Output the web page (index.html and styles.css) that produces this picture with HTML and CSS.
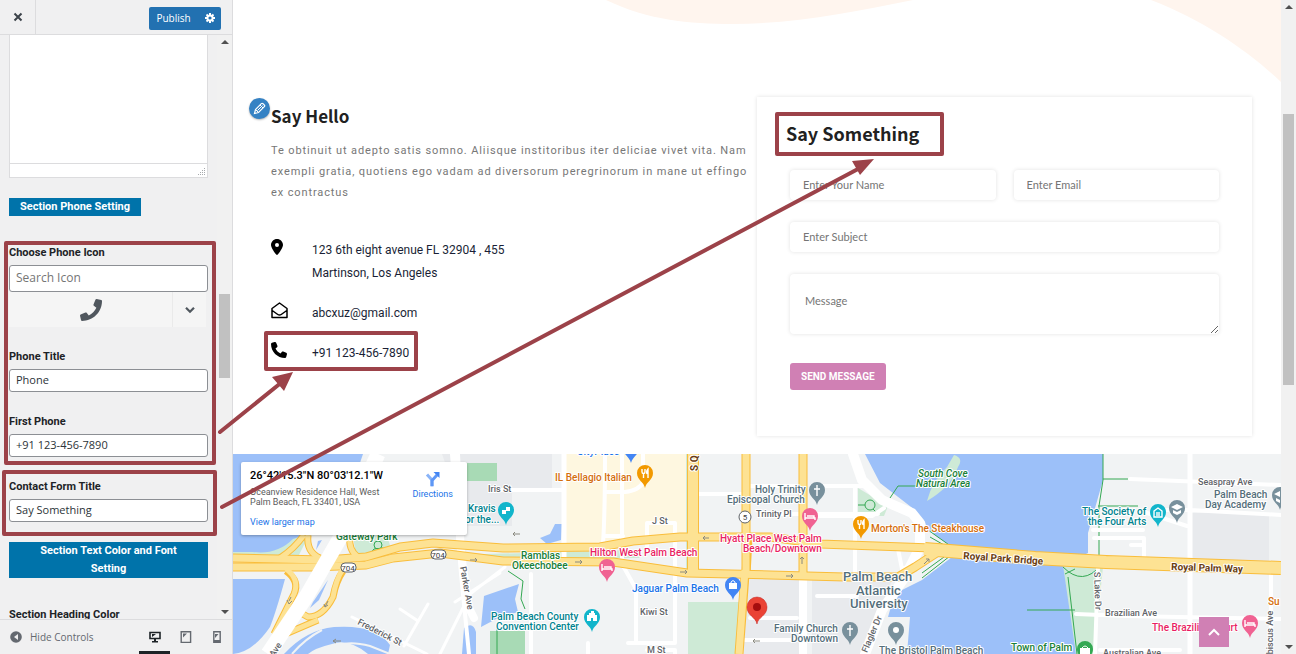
FILE: index.html
```html
<!DOCTYPE html>
<html lang="en">
<head>
    <meta charset="UTF-8">
    <meta name="viewport" content="width=device-width, initial-scale=1.0">
    <title>Customize: Contact Section</title>
    <link rel="stylesheet" href="styles.css">
</head>
<body>
    <aside class="sidebar">
        <header class="sidebar-header">
            <button class="close-btn" aria-label="Close">
                <svg width="10" height="10" viewBox="0 0 10 10"><path d="M1.5 1.5l7 7M8.5 1.5l-7 7" stroke="#3c434a" stroke-width="2"/></svg>
            </button>
            <div class="publish-group">
                <button class="publish-btn">Publish</button>
                <button class="gear-btn" aria-label="Publish settings">
                    <svg width="10" height="10" viewBox="0 0 10 10" fill="none" stroke="#fff">
                        <circle cx="5" cy="5" r="2.6" stroke-width="2"/>
                        <path d="M5 0v2M5 8v2M0 5h2M8 5h2M1.5 1.5l1.4 1.4M7.1 7.1l1.4 1.4M8.5 1.5L7.1 2.9M2.9 7.1L1.5 8.5" stroke-width="2"/>
                    </svg>
                </button>
            </div>
        </header>

        <div class="sidebar-body">
            <div class="panel">
                <div class="editor">
                    <textarea class="editor-text" aria-label="Section content"></textarea>
                    <div class="editor-status">
                        <svg width="8" height="8" viewBox="0 0 8 8" fill="#a7aaad"><path d="M6 0h1v1H6zM4 2h1v1H4zM6 2h1v1H6zM2 4h1v1H2zM4 4h1v1H4zM6 4h1v1H6zM0 6h1v1H0zM2 6h1v1H2zM4 6h1v1H4zM6 6h1v1H6z"/></svg>
                    </div>
                </div>
                <h3 class="section-title section-title-phone">Section Phone Setting</h3>

                <div class="control">
                    <label for="icon-search">Choose Phone Icon</label>
                    <input class="icon-search" id="icon-search" type="text" placeholder="Search Icon">
                    <div class="icon-picker">
                        <button class="icon-current" aria-label="Selected icon">
                            <svg width="22" height="22" viewBox="0 0 512 512" fill="#50575e"><path d="M493.4 24.6l-104-24c-11.3-2.6-22.9 3.3-27.5 13.9l-48 112c-4.2 9.8-1.4 21.3 6.9 28l60.6 49.6c-36 76.7-98.9 140.5-177.2 177.2l-49.6-60.6c-6.8-8.3-18.2-11.1-28-6.9l-112 48C3.9 366.5-2 378.1.6 389.4l24 104C27.1 504.2 36.7 512 48 512c256.1 0 464-207.5 464-464 0-11.2-7.7-20.9-18.6-23.4z"/></svg>
                        </button>
                        <button class="icon-toggle" aria-label="Show icons">
                            <svg width="10" height="8" viewBox="0 0 10 8"><path d="M1 1.8l4 4 4-4" fill="none" stroke="#50575e" stroke-width="2.2"/></svg>
                        </button>
                    </div>
                </div>
                <div class="control">
                    <label for="phone-title">Phone Title</label>
                    <input id="phone-title" type="text" value="Phone">
                </div>
                <div class="control">
                    <label for="first-phone">First Phone</label>
                    <input id="first-phone" type="text" value="+91 123-456-7890">
                </div>
                <div class="control">
                    <label for="form-title">Contact Form Title</label>
                    <input id="form-title" type="text" value="Say Something">
                </div>
                <h3 class="section-title section-title-wide">Section Text Color and Font Setting</h3>
                <span class="control-title">Section Heading Color</span>
            </div>
            <div class="scrollbar">
                <span class="arrow-up"></span>
                <span class="thumb thumb-side"></span>
                <span class="arrow-down"></span>
            </div>
        </div>

        <footer class="sidebar-footer">
            <button class="hide-controls">
                <svg width="12" height="12" viewBox="0 0 12 12"><circle cx="6" cy="6" r="5.8" fill="#646970"/><path d="M8 3v6L4 6z" fill="#f0f0f1"/></svg>
                Hide Controls
            </button>
            <div class="devices">
                <button class="device active" aria-label="Desktop">
                    <svg width="12" height="12" viewBox="0 0 12 12"><path d="M1 1.5h10v6H1z" fill="none" stroke="#1d2327" stroke-width="1.6"/><path d="M5 8h2v2h2v1.6H3V10h2zM3 3h4L3 6z" fill="#1d2327"/></svg>
                </button>
                <button class="device" aria-label="Tablet">
                    <svg width="12" height="12" viewBox="0 0 12 12"><path d="M1.2.8h9.4v10.6H1.2z" fill="none" stroke="#646970" stroke-width="1.4"/><path d="M3 2.5h4l-4 4z" fill="#646970"/></svg>
                </button>
                <button class="device" aria-label="Mobile">
                    <svg width="12" height="12" viewBox="0 0 12 12"><path d="M2.8.8h6.4v10.4H2.8z" fill="none" stroke="#646970" stroke-width="1.4"/><path d="M4 3h3.5L4 7zM3 9h6v2.4H3z" fill="#646970"/></svg>
                </button>
            </div>
        </footer>
    </aside>

    <div class="preview">
        <main class="page">
            <svg class="blob" viewBox="0 0 1048 90" preserveAspectRatio="none" aria-hidden="true" fill="#fff5ee">
                <path d="M373 0C415 20 455 24 500 24C560 24 620 12 680 0z"/>
                <path d="M918 0C975 22 1020 55 1048 82V0z"/>
            </svg>
            <section class="contact">
                <div class="info">
                    <button class="edit-shortcut" aria-label="Edit this section">
                        <svg width="13" height="13" viewBox="0 0 13 13" fill="none" stroke="#fff"><path d="M1.5 11.5l1-4 5.800-5.800q.8-.8 1.700 0l1.300 1.300q.9.8 0 1.700L5.500 10.500z" stroke-width="1.200"/><path d="M4.500 8.500l5-5M7 3l3 3M2.500 7.500l3 3"/></svg>
                    </button>
                    <h2>Say Hello</h2>
                    <p class="intro">Te obtinuit ut adepto satis somno. Aliisque institoribus iter deliciae vivet vita. Nam exempli gratia, quotiens ego vadam ad diversorum peregrinorum in mane ut effingo ex contractus</p>
                    <ul class="contact-list">
                        <li>
                            <svg width="16" height="16" viewBox="0 0 512 512"><path d="M215.700 499.200C267 435 384 279.400 384 192C384 86 298 0 192 0S0 86 0 192c0 87.400 117 243 168.300 307.200c12.300 15.300 35.100 15.300 47.400 0zM192 128a64 64 0 1 1 0 128 64 64 0 1 1 0-128z"/></svg>
                            <span>123 6th eight avenue FL 32904 , 455<br>Martinson, Los Angeles</span>
                        </li>
                        <li>
                            <svg width="17" height="17" viewBox="0 0 17 17" fill="none" stroke="#000" stroke-width="1.500" stroke-linejoin="round"><path d="M1 6.500L8.500 1 16 6.500V15.500H1zM1.200 8.500l5.600 4q1.700 1.200 3.400 0L15.800 8.500"/></svg>
                            <span>abcxuz@gmail.com</span>
                        </li>
                        <li>
                            <svg width="16" height="16" viewBox="0 0 512 512"><path d="M164.900 24.600c-7.700-18.600-28-28.500-47.400-23.200l-88 24C12.100 30.200 0 46 0 64C0 311.400 200.600 512 448 512c18 0 33.800-12.100 38.600-29.500l24-88c5.300-19.400-4.600-39.700-23.200-47.400l-96-40c-16.300-6.800-35.200-2.100-46.300 11.600L304.700 368C234.300 334.700 177.300 277.700 144 207.300L193.300 167c13.700-11.200 18.400-30 11.600-46.300l-40-96z"/></svg>
                            <span>+91 123-456-7890</span>
                        </li>
                    </ul>
                </div>

                <form class="form-card">
                    <h2>Say Something</h2>
                    <div class="fields">
                        <input type="text" placeholder="Enter Your Name" aria-label="Name">
                        <input type="email" placeholder="Enter Email" aria-label="Email">
                        <input class="full" type="text" placeholder="Enter Subject" aria-label="Subject">
                        <textarea class="full" placeholder="Message" aria-label="Message"></textarea>
                    </div>
                    <button class="send-btn" type="button">SEND MESSAGE</button>
                </form>
            </section>

            <section class="map">
                <svg class="map-canvas" viewBox="233 454 1048 200" preserveAspectRatio="xMinYMin slice">
                    <defs>
                        <path id="pin" d="M0 14C-1 8-8 6-8-1a8 8 0 0 1 16 0C8 6 1 8 0 14z"/>
                    </defs>
                    <rect x="233" y="454" width="1048" height="200" fill="#f1f3f4"/>

                    <!-- blocks -->
                    <path d="M442 454h110v38h-40v34h-45z" fill="#e8eaed"/>
                    <path d="M750 578h55v76h-68zM812 580h80l-28 74h-52z" fill="#e8eaed"/>
                    <path d="M1192 513h77v48h-77z" fill="#e8eaed"/>
                    <path d="M564 454h123v82l-60 8h-61z" fill="#fef7e0"/>

                    <!-- parks -->
                    <path d="M467 463h30v18h-30zM490 631l35 0v23h-35z" fill="#a8dab5"/>
                    <path d="M688 602h51l-3 52h-48zM686 454h4v118h-4z" fill="#ceead6"/>
                    <path d="M233 550q45 3 60-15h16l-12 24h-64z" fill="#ceead6"/>
                    <path d="M353 535h34l4 14-35 8zM450 555l180-5 10 8H500z" fill="#ceead6"/>
                    <path d="M858 488l30 18-4 10h-26z" fill="#ceead6"/>

                    <!-- water -->
                    <g fill="#9cc0f9">
                        <path d="M233 454h130q-8 20-5 45l-30 28-35 12q-16 16-40 13h-20z"/>
                        <path d="M233 579h52q-9 33-15 48-17 25-37 27z"/>
                        <path d="M328 580l-9 20-9 8 3-6z"/>
                        <path d="M322 540l-6 10 2-9z"/>
                        <path d="M284 654q22-24 50-27 42-3 56 18l-2 9h-20q-20-16-36-10-17 4-24 10z"/>
                        <path d="M562 524l-1 16-14 4-7-6 10-4 5-10z"/>
                        <path d="M484 596l35-12-4 15 3 13-20 6-17 9z"/>
                        <path d="M464 628q9-7 12 4v22h-14z"/>
                        <path d="M865 454l15 29 35 27 10 12 3 8 24 17v10l-30 23-20 10-12 20-2 7h22l-3 37h169l-8-77-5-12 25-12v-20l15-53v-26z"/>
                    </g>
                    <path d="M292 654q14-16 30-24M330 654q8-16 40-8l20 8" fill="none" stroke="#f1f3f4" stroke-width="2"/>
                    <path d="M1063 565l40 2-9 87h-18z" fill="#ceead6"/>
                    <path d="M954 455q10 3 4 12-7 20-31 34 5-20 20-34z" fill="#ceead6"/>
                    <path d="M890 498l8-12h20M1103 454v26l-4 26v50M1103 479h25M1098 506h40M1068 577l9 77M1063 567q20 20 38-2M1027 610h48M1065 574l10-5M928 530l24 17M930 537l14 8M922 578l28-22M922 573l22-16M508 571l15 10-2 18 4 10M497 654v-25" fill="none" stroke="#34a853"/>
                    <path d="M858 505h7m8 4l5 5M865 505a5 5 0 1 0 10 0 5 5 0 1 0-10 0M374 545a4 4 0 1 0 8 0 4 4 0 1 0-8 0M368 556l6-7 9-1 9 5" fill="none" stroke="#34a853"/>

                    <!-- local streets -->
                    <g fill="none" stroke="#fff" stroke-width="4" stroke-linejoin="round" stroke-linecap="round">
                        <path d="M452 454l9 120 8 80M500 490h64M564 454v105M605 454q0 60-2 90M622 454v110l14 25v54h39v-120h-28v28M605 536h18M605 492h20q15-2 18-10v-28"/>
                        <path d="M628 643h9M647 650h28v4M531 654v-80M588 643v11M694 494h50M750 486h50M750 618h47M745 640h55M760 514h118M812 486h52M812 516h60l12-8M855 487v90M898 549l4 20 14-6M817 596h40"/>
                        <path d="M352 617l75 37M400 609l18 12M428 604l-24 42M440 654l30-60 35-27M455 602l45-29" stroke-width="3"/>
                        <path d="M1130 479l150 6M1147 513l40 13h3M1190 454v200M1160 510l30 0 92 5M1093 530h50M1094 538h50v24M1131 545h12M1076 614l50 2 155 3M1098 566l-3 88M1271 572v82M1100 650h80"/>
                        <path d="M803 578v76" stroke-width="8"/>
                        <path d="M456 454l5 100 8 54 5 10" stroke-width="8"/>
                        <path d="M1190 454v200M564 454v105" stroke-width="5"/>
                        <path d="M853 454l9 26 20 20 30 13 8 10v24l-15 30-23 33-17 44" stroke-width="10"/>
                    </g>

                    <!-- main roads, outline first and fill above -->
                    <g fill="none" stroke-linejoin="round">
                        <g stroke="#f9bd3b">
                            <path d="M233 558l93 2 40-3 34-10 33-4 70 5 97-1 33-6 47-4h90l50 7 112 4" stroke-width="9"/>
                            <path d="M233 567h80l53-2 27-7 47-5 63 8 110 1 74 11 83 2 75 2h53l17-10 23-15" stroke-width="9"/>
                            <path d="M745 575l-6 79M803 454v122M748 538l-2 37" stroke-width="9"/>
                            <path d="M693 454v122" stroke-width="12"/>
                            <path d="M746 454v122" stroke-width="9"/>
                            <path d="M925 549l110 9 71 4 175 6" stroke-width="14"/>
                            <path d="M286 571q14 10 8 23l-20 40M343 571q-7 10-10 26-10 20-25 20l-14-8M304 535q-10 14-24 23M308 535q-2 17 12 23M350 535q-2 15 8 22M318 620l-35 15" stroke-width="7"/>
                        </g>
                        <g stroke="#fde293">
                            <path d="M233 558l93 2 40-3 34-10 33-4 70 5 97-1 33-6 47-4h90l50 7 112 4" stroke-width="7"/>
                            <path d="M233 567h80l53-2 27-7 47-5 63 8 110 1 74 11 83 2 75 2h53l17-10 23-15" stroke-width="7"/>
                            <path d="M745 570l-6 84M803 454v122" stroke-width="7"/>
                            <path d="M693 454v120" stroke-width="10"/>
                            <path d="M746 454v122" stroke-width="7"/>
                            <path d="M924 549l111 9 71 4 176 6" stroke-width="12"/>
                            <path d="M286 569q14 10 8 25l-20 40M343 569q-7 10-10 28-10 20-25 20l-14-8M304 535q-10 14-24 23M308 535q-2 17 12 23M350 535q-2 15 8 22M318 620l-35 15" stroke-width="5"/>
                        </g>
                        <path d="M378 454l-38 84-34 59-38 57" stroke="#fff" stroke-width="15"/>
                        <path d="M291 597l-2 4m3 0l-3 3-2-4M328 601l-3 6m3-2l-3 2-1-3M341 641l-8 0m3-2l-3 2 3 2M470 560h7m-2-2l2 2-2 2M575 562h7m-2-2l2 2-2 2M680 572h7m-2-2l2 2-2 2M709 538h-6m2-2l-2 2 2 2M786 576h7m-2-2l2 2-2 2M802 564v-7m-2 2l2-2 2 2M520 534h-7m2-2l-2 2 2 2M760 641h-7m2-2l-2 2 2 2M924 564l5-5m-3 0h3v3" stroke="#8a8a80"/>
                    </g>

                    <!-- route shields -->
                    <g fill="#fff" stroke="#5f6368">
                        <rect x="341" y="563" width="15" height="9" rx="4"/>
                        <rect x="431" y="550" width="15" height="9" rx="4"/>
                        <circle cx="745" cy="517" r="6"/>
                    </g>
                    <g class="shield">
                        <text x="348" y="571">704</text>
                        <text x="438" y="558">704</text>
                        <text x="745" y="520">5</text>
                    </g>

                    <!-- places -->
                    <g class="label food">
                        <text x="555" y="481">IL Bellagio Italian</text>
                        <text x="871" y="532">Morton's The Steakhouse</text>
                        <text x="1268" y="605">Su</text>
                    </g>
                    <g class="label hotel">
                        <text x="590" y="556">Hilton West Palm Beach</text>
                        <text x="720" y="542">Hyatt Place West Palm</text>
                        <text x="743" y="552">Beach/Downtown</text>
                        <text x="1152" y="631">The Brazilian Court</text>
                    </g>
                    <g class="label culture">
                        <text x="468" y="512">Kravis</text>
                        <text x="465" y="523">or the...</text>
                        <text x="491" y="620">Palm Beach County</text>
                        <text x="496" y="630">Convention Center</text>
                        <text x="1082" y="515">The Society of</text>
                        <text x="1088" y="525">the Four Arts</text>
                    </g>
                    <g class="label park">
                        <text x="336" y="540">Gateway Park</text>
                        <text x="521" y="559">Ramblas</text>
                        <text x="512" y="569">Okeechobee</text>
                        <text class="italic" x="918" y="477">South Cove</text>
                        <text class="italic" x="916" y="487">Natural Area</text>
                        <text x="1011" y="651">Town of Palm</text>
                    </g>
                    <g class="label shop">
                        <text x="577" y="455">CityPlace</text>
                        <text x="632" y="592">Jaguar Palm Beach</text>
                    </g>
                    <g class="label civic">
                        <text x="755" y="493">Holy Trinity</text>
                        <text x="727" y="503">Episcopal Church</text>
                        <text x="774" y="632">Family Church</text>
                        <text x="791" y="642">Downtown</text>
                        <text x="879" y="654">The Bristol Palm Beach</text>
                        <text x="1214" y="498">Palm Beach</text>
                        <text x="1205" y="508">Day Academy</text>
                        <g class="large">
                            <text x="843" y="581">Palm Beach</text>
                            <text x="856" y="595">Atlantic</text>
                            <text x="850" y="608">University</text>
                        </g>
                    </g>
                    <g class="label street">
                        <text x="488" y="492">Iris St</text>
                        <text x="652" y="524">J St</text>
                        <text x="640" y="615">Kiwi St</text>
                        <text x="647" y="653">M St</text>
                        <text x="756" y="517">Trinity Pl</text>
                        <text x="1198" y="485">Seaspray Ave</text>
                        <text x="1105" y="616">Brazilian Ave</text>
                        <text x="1103" y="656">Australian Ave</text>
                        <text transform="translate(460 567) rotate(80)">Parker Ave</text>
                        <text transform="translate(357 624) rotate(27)">Frederick St</text>
                        <text transform="translate(271 662) rotate(-57)">r Ave</text>
                        <text transform="translate(867 653) rotate(-67)">Flagler Dr</text>
                        <text transform="translate(1094 572) rotate(88)">S Lake Dr</text>
                        <text transform="translate(1273 663) rotate(-90)">Hibiscus Ave</text>
                    </g>
                    <g class="label highway">
                        <text transform="translate(963 559) rotate(4)">Royal Park Bridge</text>
                        <text transform="translate(1171 570) rotate(2)">Royal Palm Way</text>
                        <text transform="translate(698 471) rotate(-90)">S Q</text>
                    </g>

                    <!-- pins -->
                    <g fill="#f29900">
                        <use href="#pin" x="645" y="474"/>
                        <use href="#pin" x="861" y="525"/>
                    </g>
                    <g fill="#f06292">
                        <use href="#pin" x="607" y="568"/>
                        <use href="#pin" x="810" y="517"/>
                        <use href="#pin" x="1250" y="624"/>
                    </g>
                    <g fill="#12b5cb">
                        <use href="#pin" x="506" y="511"/>
                        <use href="#pin" x="592" y="618"/>
                        <use href="#pin" x="1158" y="513"/>
                    </g>
                    <g fill="#4285f4">
                        <use href="#pin" x="631" y="449"/>
                        <use href="#pin" x="733" y="586"/>
                    </g>
                    <g fill="#78909c">
                        <use href="#pin" x="817" y="491"/>
                        <use href="#pin" x="850" y="631"/>
                        <use href="#pin" x="896" y="631"/>
                        <use href="#pin" x="1177" y="509"/>
                        <use href="#pin" x="1280" y="496"/>
                    </g>
                    <use href="#pin" x="1085" y="650" fill="#34a853"/>
                    <path d="M757 624c-1-7-10-8-10-17a10 10 0 0 1 20 0c0 9-9 10-10 17z" fill="#ea4335" stroke="#c5221f" stroke-width=".5"/>
                    <circle cx="757" cy="607" r="4" fill="#a50e0e"/>
                    <g fill="none" stroke="#fff" stroke-width="1.400">
                        <path d="M642 469v3q0 1.500 1.500 1.500V478M645 469v3q0 1.500-1.500 1.500M648 478v-9q-2 2-1 5M858 520v3q0 1.500 1.500 1.500V529M861 520v3q0 1.500-1.500 1.500M864 529v-9q-2 2-1 5"/>
                        <path d="M602 564v7M602 569h10v2M604 567h7v2M805 513v7M805 518h10v2M807 516h7v2M1245 620v7M1245 625h10v2M1247 623h7v2"/>
                        <path d="M817 485v11M814 489h6M850 625v11M847 629h6"/>
                        <path d="M1154 517v-6l4-3 4 3v6zM1157 512v4M1159 512v4"/>
                    </g>
                    <path d="M587 621v-6h2v-2h2v-2h3v2h1v2h2v6h-4v-3h-2v3zM729 583h8v6h-8zM1080 648h10v6h-10zM502 510h4v4h-4zM506 507h4v4h-4z" fill="#fff"/>
                    <path d="M731 584v-2q2-3 4 0v2M1082 648q3-4 6 0" fill="none" stroke="#fff"/>
                    <path d="M1171 507l6-3 6 3-6 3zM1173 510l4 2 4-2v3l-4 2-4-2zM1274 494l6-3v6zM1276 498l4 2v3l-4-2z" fill="#fff"/>
                    <circle cx="896" cy="630" r="3" fill="#fff"/>
                </svg>

                <div class="map-card">
                    <div class="map-address">
                        <strong>26°42'15.3"N 80°03'12.1"W</strong>
                        <p>Oceanview Residence Hall, West<br>Palm Beach, FL 33401, USA</p>
                        <a href="#">View larger map</a>
                    </div>
                    <a class="directions" href="#">
                        <svg width="16" height="16" viewBox="0 0 16 16"><path d="M7 15.500V9L2 3.500" fill="none" stroke="#8ab4f8" stroke-width="3"/><path d="M7 15V9.500L12 4" fill="none" stroke="#5e97f6" stroke-width="3"/><path d="M8.500 1H14.500V7z" fill="#4285f4"/></svg>
                        Directions
                    </a>
                </div>
                <a class="to-top" href="#" aria-label="Back to top">
                    <svg width="12" height="8" viewBox="0 0 12 8"><path d="M1 7l5-5 5 5" fill="none" stroke="#fff" stroke-width="2"/></svg>
                </a>
            </section>
        </main>
        <div class="scrollbar">
            <span class="arrow-up"></span>
            <span class="thumb thumb-page"></span>
            <span class="arrow-down"></span>
        </div>
    </div>

    <!-- callouts drawn over the whole screen -->
    <svg class="callouts" viewBox="0 0 1296 654" preserveAspectRatio="xMinYMin" aria-hidden="true">
        <g fill="none" stroke="#9c4249" stroke-width="4" stroke-linejoin="round" stroke-linecap="round">
            <rect x="6" y="243" width="208" height="220"/>
            <rect x="4" y="472" width="211" height="62"/>
            <rect x="266" y="333" width="150" height="36"/>
            <rect x="777" y="114" width="165" height="40"/>
            <path d="M220 432l62-50M222 507l636-338"/>
        </g>
        <path d="M293 372l-9 19-12-14zM874 159l-14 16-8-14z" fill="#9c4249"/>
    </svg>
</body>
</html>
```
FILE: styles.css
```css
* {
    box-sizing: border-box;
}
body {
    margin: 0;
    height: 100vh;
    display: flex;
    position: relative;
    overflow: hidden;
    font-family: "Open Sans", "Noto Sans", sans-serif;
    font-size: 11px;
    color: #3c434a;
    background: #fff;
}
h2, h3, p, ul {
    margin: 0;
    padding: 0;
}
button {
    border: none;
    padding: 0;
    background: none;
    font-family: inherit;
    cursor: pointer;
}
svg {
    display: block;
}

/* sidebar */
.sidebar {
    width: 233px;
    flex: none;
    display: flex;
    flex-direction: column;
    background: #f0f0f1;
    border-right: 1px solid #dcdcde;
}
.sidebar-header {
    height: 35px;
    flex: none;
    display: flex;
    justify-content: space-between;
    align-items: center;
    padding-right: 11px;
    border-bottom: 1px solid #dcdcde;
}
.close-btn {
    width: 36px;
    height: 100%;
    display: flex;
    align-items: center;
    justify-content: center;
    border-right: 1px solid #dcdcde;
}
.publish-group {
    display: flex;
    height: 23px;
    margin-top: 2px;
    border-radius: 2px;
    overflow: hidden;
    background: #2271b1;
}
.publish-btn {
    width: 49px;
    color: #fff;
    font-size: 10px;
}
.gear-btn {
    width: 23px;
    display: flex;
    align-items: center;
    justify-content: center;
}
.sidebar-body {
    flex: 1;
    min-height: 0;
    display: flex;
}
.panel {
    flex: 1;
    overflow: hidden;
    padding: 0 9px;
}
.editor {
    border: 1px solid #dcdcde;
    border-top: none;
    background: #fff;
}
.editor-text {
    display: block;
    width: 100%;
    height: 128px;
    border: none;
    resize: none;
}
.editor-status {
    height: 14px;
    display: flex;
    justify-content: flex-end;
    align-items: flex-end;
    padding: 1px;
    border-top: 1px solid #dcdcde;
}
.section-title {
    background: #0073aa;
    color: #fff;
    font-family: Roboto, sans-serif;
    font-size: 11px;
    line-height: 18px;
    text-align: center;
}
.section-title-phone {
    width: fit-content;
    margin: 20px 0 27px;
    padding: 0 11px;
}
.section-title-wide {
    margin: 20px 0 27px;
    padding: 0 24px;
}
.control {
    margin-bottom: 20px;
}
.control label, .control-title {
    display: block;
    color: #1d2327;
    font-family: Roboto, sans-serif;
    font-weight: 700;
    line-height: 20px;
    margin-bottom: 2px;
}
.control input {
    display: block;
    width: 100%;
    height: 23px;
    padding: 0 6px 2px;
    border: 1px solid #8c8f94;
    border-radius: 3px;
    background: #fff;
    color: #2c3338;
    font-family: inherit;
    font-size: 11px;
}
.control .icon-search {
    height: 27px;
    font-size: 12px;
}
.icon-search::placeholder {
    color: #757575;
}
.icon-picker {
    display: flex;
    height: 35px;
    margin-right: 2px;
    background: #f5f5f5;
}
.icon-current, .icon-toggle {
    display: flex;
    align-items: center;
    justify-content: center;
}
.icon-current {
    flex: 1;
}
.icon-toggle {
    width: 34px;
    border-left: 1px solid #eaeaea;
}
.sidebar-footer {
    height: 35px;
    flex: none;
    display: flex;
    justify-content: space-between;
    border-top: 1px solid #dcdcde;
}
.hide-controls {
    display: flex;
    align-items: center;
    gap: 8px;
    padding-left: 10px;
    color: #646970;
    font-size: 10px;
}
.devices {
    display: flex;
}
.device {
    width: 31px;
    display: flex;
    align-items: center;
    justify-content: center;
    border-bottom: 3px solid transparent;
    padding-top: 3px;
}
.device.active {
    border-bottom-color: #1d2327;
}

/* scrollbars */
.scrollbar {
    width: 15px;
    flex: none;
    display: flex;
    flex-direction: column;
    align-items: center;
    padding: 5px 0;
    background: #f1f1f1;
}
.arrow-up, .arrow-down {
    border: 4px solid transparent;
}
.arrow-up {
    border-top: none;
    border-bottom-color: #505050;
}
.arrow-down {
    border-bottom: none;
    border-top-color: #505050;
    margin-top: auto;
}
.thumb {
    width: 11px;
    background: #c1c1c1;
}
.thumb-side {
    height: 84px;
    margin-top: 250px;
}
.thumb-page {
    height: 271px;
    margin-top: 105px;
}

/* preview */
.preview {
    flex: 1;
    min-width: 0;
    display: flex;
}
.page {
    flex: 1;
    min-width: 0;
    display: flex;
    flex-direction: column;
    position: relative;
    font-family: Roboto, sans-serif;
}
.blob {
    position: absolute;
    top: 0;
    left: 0;
    width: 100%;
    height: 90px;
}
.contact {
    position: relative;
    display: grid;
    grid-template-columns: 480fr 495fr;
    gap: 6px;
    padding: 97px 29px 18px 38px;
}
.contact h2 {
    font-family: "Noto Sans CJK SC", sans-serif;
    font-size: 17px;
    font-weight: 700;
    line-height: 24px;
    color: #212121;
}
.info {
    position: relative;
    padding-top: 7px;
}
.edit-shortcut {
    position: absolute;
    top: 1px;
    left: -22px;
    width: 21px;
    height: 21px;
    display: flex;
    align-items: center;
    justify-content: center;
    border-radius: 50%;
    background: #3582c4;
    box-shadow: 0 1px 2px rgba(0,0,0,0.3);
}
.intro {
    margin-top: 12px;
    font-size: 11px;
    line-height: 21px;
    letter-spacing: 0.08em;
    color: #777;
}
.contact-list {
    list-style: none;
    margin-top: 36px;
    display: flex;
    flex-direction: column;
    gap: 17px;
}
.contact-list li {
    display: grid;
    grid-template-columns: 17px 1fr;
    gap: 24px;
    font-size: 12px;
    line-height: 23px;
    color: #1a1f36;
}
.form-card {
    min-height: 339px;
    padding: 24px 33px 46px;
    box-shadow: 0 0 4px rgba(0,0,0,0.12);
}
.form-card h2 {
    margin-left: -4px;
    font-size: 18px;
}
.fields {
    display: grid;
    grid-template-columns: 1fr 1fr;
    gap: 22px 18px;
    margin-top: 25px;
}
.fields input, .fields textarea {
    width: 100%;
    min-width: 0;
    height: 30px;
    padding: 0 13px 2px;
    border: none;
    border-radius: 4px;
    box-shadow: 0 0 4px rgba(0,0,0,0.12);
    background: #fff;
    font-family: Lato, sans-serif;
    font-size: 11px;
}
.fields .full {
    grid-column: 1 / -1;
}
.fields textarea {
    height: 60px;
    padding: 20px 15px;
}
.fields ::placeholder {
    color: #757575;
}
.send-btn {
    height: 27px;
    margin-top: 29px;
    padding: 0 11px;
    border-radius: 3px;
    background: #d080b4;
    color: #fff;
    font-family: Roboto, sans-serif;
    font-size: 10px;
    font-weight: 700;
}

/* map */
.map {
    position: relative;
    flex: 1;
    min-height: 0;
    overflow: hidden;
}
.map-canvas {
    width: 100%;
    height: 100%;
}
.map text {
    font-family: Roboto, sans-serif;
}
.label {
    font-size: 10px;
    font-weight: 500;
    stroke: #fff;
    stroke-width: 2px;
    stroke-linejoin: round;
    paint-order: stroke;
}
.food { fill: #d56e0c; }
.hotel { fill: #e91e63; }
.culture { fill: #00838f; }
.park { fill: #188038; }
.shop { fill: #1a73e8; }
.civic { fill: #546e7a; }
.street {
    fill: #5f6368;
    font-size: 9px;
}
.highway {
    fill: #6b3e12;
    font-weight: 700;
}
.large {
    font-size: 13px;
}
.italic {
    font-style: italic;
}
.shield {
    font-size: 8px;
    fill: #3c4043;
    text-anchor: middle;
}
.map-card {
    position: absolute;
    top: 8px;
    left: 8px;
    width: 226px;
    display: flex;
    justify-content: space-between;
    padding: 7px 14px 6px 9px;
    border-radius: 2px;
    background: #fff;
    box-shadow: 0 1px 3px rgba(0,0,0,0.3);
    font-size: 9px;
}
.map-card strong {
    font-size: 11px;
    font-weight: 500;
    line-height: 14px;
    color: #000;
}
.map-card p {
    margin: 4px 0 8px;
    line-height: 10px;
    color: #5b5b5b;
}
.map-card a {
    color: #1a73e8;
    line-height: 14px;
    text-decoration: none;
}
.map-card .directions {
    display: flex;
    flex-direction: column;
    align-items: center;
    padding-top: 2px;
}
.to-top {
    position: absolute;
    right: 52px;
    bottom: 7px;
    width: 30px;
    height: 30px;
    display: flex;
    align-items: center;
    justify-content: center;
    background: #d080b4;
}
.callouts {
    position: absolute;
    top: 0;
    left: 0;
    width: 100%;
    height: 100%;
    pointer-events: none;
}
```
